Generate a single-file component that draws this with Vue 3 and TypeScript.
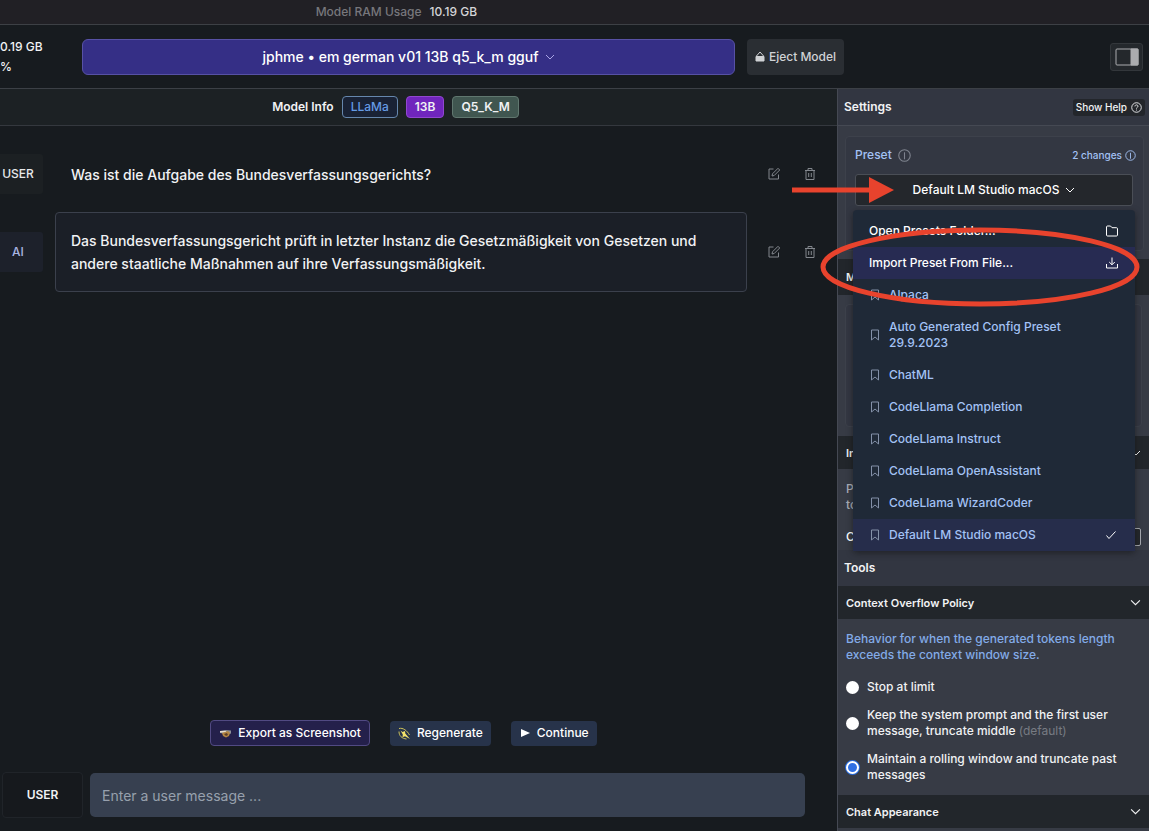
<script setup lang="ts">
import { ref } from 'vue'

interface Message { role: string; text: string; boxed: boolean }
interface Policy { id: string; label: string; note?: string }

const messages: Message[] = [
  { role: 'USER', text: 'Was ist die Aufgabe des Bundesverfassungsgerichts?', boxed: false },
  {
    role: 'AI',
    text: 'Das Bundesverfassungsgericht prüft in letzter Instanz die Gesetzmäßigkeit von Gesetzen und andere staatliche Maßnahmen auf ihre Verfassungsmäßigkeit.',
    boxed: true,
  },
]

const presets: string[] = [
  'Alpaca',
  'Auto Generated Config Preset 29.9.2023',
  'ChatML',
  'CodeLlama Completion',
  'CodeLlama Instruct',
  'CodeLlama OpenAssistant',
  'CodeLlama WizardCoder',
  'Default LM Studio macOS',
]
const preset = ref('Default LM Studio macOS')
const menuOpen = ref(true)

const policies: Policy[] = [
  { id: 'stop', label: 'Stop at limit' },
  { id: 'keep', label: 'Keep the system prompt and the first user message, truncate middle', note: '(default)' },
  { id: 'roll', label: 'Maintain a rolling window and truncate past messages' },
]
const policy = ref('roll')
const draft = ref('')
</script>

<template>
  <div class="app">
    <div class="topbar">
      <span class="dim">Model RAM Usage</span><span>10.19 GB</span>
    </div>

    <header class="header">
      <div class="usage"><span>0.19 GB</span><span>%</span></div>
      <button class="model" type="button">
        jphme • em german v01 13B q5_k_m gguf
        <svg width="10" height="6" viewBox="0 0 10 6"><path d="M1 1l4 4 4-4" /></svg>
      </button>
      <button class="eject" type="button">
        <svg width="10" height="11" viewBox="0 0 10 11"><path d="M5 1L9 5.500H1Z" /><path class="solid" d="M1 6h8v4H1z" /></svg>
        Eject Model
      </button>
      <button class="toggle" type="button" aria-label="Toggle sidebar">
        <svg width="24" height="18" viewBox="0 0 24 18"><rect x="1" y="1" width="22" height="16" rx="1" /><path d="M16 1h7v16h-7z" /></svg>
      </button>
    </header>

    <div class="body">
      <main class="chat">
        <div class="info">
          <span>Model Info</span>
          <span class="chip llama">LLaMa</span>
          <span class="chip size">13B</span>
          <span class="chip quant">Q5_K_M</span>
        </div>

        <div class="messages">
          <div v-for="m in messages" :key="m.role" class="message">
            <div class="role" :class="{ ai: m.boxed }">{{ m.role }}</div>
            <p class="bubble" :class="{ boxed: m.boxed }">{{ m.text }}</p>
            <button class="icon" type="button" aria-label="Edit">
              <svg width="14" height="14" viewBox="0 0 14 14"><path d="M6.500 2H2v10h9.500V7.500M5 9l.5-2.200L11 1.300l1.700 1.700-5.500 5.500z" /></svg>
            </button>
            <button class="icon" type="button" aria-label="Delete">
              <svg width="14" height="14" viewBox="0 0 14 14"><path d="M2 3.500h10M5 3.500V1.500h4v2M3 3.500v9h8v-9M5.700 6v4M8.300 6v4" /></svg>
            </button>
          </div>
        </div>

        <footer class="composer">
          <div class="actions">
            <button class="action export" type="button">
              <svg width="13" height="12" viewBox="0 0 13 12"><path d="M1 4l5-1 6 .5v3L9 7.500 1 6z" fill="#8d9096" /><path d="M1 4h6v1.500H1z" fill="#e9dfcf" /><path d="M3 6l6-2 2 2-1 3-3 1.500L4 9z" fill="#b48643" /><path d="M5 7l3-1 1 2-2 1z" fill="#5b3e29" /></svg>
              Export as Screenshot
            </button>
            <button class="action" type="button">
              <svg width="13" height="13" viewBox="0 0 13 13"><path class="trail" d="M1 1.500C5 .5 9 3.500 11.500 8M1 4.500C1 9 4 11.500 8.500 12" /><path d="M2.500 3.500l2 1.500L7 4l.3 2.500L12 12 7 9.300l-2.500 1 .3-2.800z" fill="#f3e36b" /></svg>
              Regenerate
            </button>
            <button class="action" type="button">
              <svg width="12" height="10" viewBox="0 0 12 10"><path d="M2 1l9 4-9 4z" fill="#fff" /></svg>
              Continue
            </button>
          </div>
          <form class="entry" @submit.prevent>
            <button class="as" type="button">USER</button>
            <input v-model="draft" type="text" aria-label="User message" placeholder="Enter a user message ..." />
          </form>
        </footer>
      </main>

      <aside class="settings">
        <div class="title">
          <h2>Settings</h2>
          <button class="help" type="button">
            Show Help
            <svg width="11" height="11" viewBox="0 0 12 12"><circle cx="6" cy="6" r="5.200" /><path d="M4.300 4.800c0-2.300 3.500-2 3.300 0C7.500 6 6 5.700 6 7.200M6 8.300v1" /></svg>
          </button>
        </div>

        <section class="pane preset-pane">
          <div class="card">
            <div class="preset-head">
              <span class="preset-name">Preset
                <svg width="13" height="13" viewBox="0 0 12 12"><circle cx="6" cy="6" r="5.300" /><path d="M6 3v6.500" /></svg>
              </span>
              <span class="changes">2 changes
                <svg width="11" height="11" viewBox="0 0 12 12"><circle cx="6" cy="6" r="5.200" /><path d="M6 3v6.500" /></svg>
              </span>
            </div>
            <div class="picker">
              <button class="select" type="button" aria-haspopup="menu" :aria-expanded="menuOpen" @click="menuOpen = !menuOpen">
                {{ preset }}
                <svg width="10" height="6" viewBox="0 0 10 6"><path d="M1 1l4 4 4-4" /></svg>
              </button>
              <div v-if="menuOpen" class="menu" role="menu">
                <button class="item command" type="button" role="menuitem">
                  <span>Open Presets Folder...</span>
                  <svg width="14" height="14" viewBox="0 0 14 14"><path d="M1.500 3c0-.6.4-1 1-1h3l1.500 1.700h4.500c.6 0 1 .4 1 1V11c0 .6-.4 1-1 1h-9c-.6 0-1-.4-1-1z" /></svg>
                </button>
                <button class="item command hover" type="button" role="menuitem">
                  <span>Import Preset From File...</span>
                  <svg width="14" height="14" viewBox="0 0 14 14"><path d="M7 1.500v7M4.200 6L7 8.800 9.800 6M1.500 8v4h11V8" /></svg>
                </button>
                <button
                  v-for="p in presets" :key="p" class="item" :class="{ chosen: p === preset }"
                  type="button" role="menuitemradio" :aria-checked="p === preset" @click="preset = p"
                >
                  <svg class="mark" width="12" height="12" viewBox="0 0 12 12"><path d="M2.500 1h7v10L6 8l-3.500 3z" /></svg>
                  <span>{{ p }}</span>
                  <svg v-if="p === preset" width="12" height="10" viewBox="0 0 12 10"><path d="M1.500 5.500l2.500 3L10.500 1.500" /></svg>
                </button>
              </div>
            </div>
          </div>
        </section>

        <h3 class="bar model-bar">M</h3>
        <section class="pane config-pane"><div class="card tall"></div></section>

        <h3 class="bar">In
          <svg width="10" height="6" viewBox="0 0 10 6"><path d="M1 1l4 4 4-4" /></svg>
        </h3>
        <section class="pane infer-pane">
          <p>P<br />to</p>
          <label class="ctx">C <input type="text" /></label>
        </section>

        <h2 class="tools">Tools</h2>
        <h3 class="bar">Context Overflow Policy
          <svg width="11" height="7" viewBox="0 0 10 6"><path d="M1 1l4 4 4-4" /></svg>
        </h3>
        <section class="pane policy-pane">
          <p>Behavior for when the generated tokens length exceeds the context window size.</p>
          <label v-for="o in policies" :key="o.id" class="policy">
            <input v-model="policy" type="radio" name="policy" :value="o.id" />
            <span>{{ o.label }} <span v-if="o.note" class="note">{{ o.note }}</span></span>
          </label>
        </section>
        <h3 class="bar">Chat Appearance
          <svg width="11" height="7" viewBox="0 0 10 6"><path d="M1 1l4 4 4-4" /></svg>
        </h3>
      </aside>
    </div>

    <svg class="marks" width="360" height="320" viewBox="0 0 360 320" aria-hidden="true">
      <path d="M3 190h80" />
      <path class="head" d="M80 177l25 13-25 13z" />
      <ellipse cx="191" cy="267" rx="157" ry="37" />
    </svg>
  </div>
</template>

<style>
body { margin: 0; background: #171b20; }
</style>

<style scoped>
* { box-sizing: border-box; }
.app {
  position: relative; display: flex; flex-direction: column; min-height: 100vh; overflow: hidden;
  background: #171b1f; color: #f1f2f4; font: 500 12px/16px Inter, "Liberation Sans", sans-serif;
}
h2, h3, p { margin: 0; font-size: 12px; line-height: 16px; }
h2, h3 { font-weight: 600; }
button { margin: 0; padding: 0; border: 0; background: none; color: inherit; font: inherit; cursor: pointer; }
svg { flex: none; fill: none; stroke: currentColor; }
.topbar {
  display: flex; justify-content: center; align-items: center; gap: 8px; height: 25px; padding-right: 31%;
  border-bottom: 1px solid #3d4045; background: #212025; color: #d4d4d7;
}
.dim { color: #77777c; }
.header {
  display: grid; grid-template-columns: 70px minmax(0, 653fr) 97px minmax(33px, 287fr); column-gap: 12px;
  align-items: center; height: 64px; padding-right: 6px; border-bottom: 1px solid #3c4046;
}
.usage { display: flex; flex-direction: column; gap: 4px; }
.model {
  display: flex; align-items: center; justify-content: center; gap: 6px; height: 36px;
  border: 1px solid #5751a5; border-radius: 6px; background: #352f86; color: #fff; font-size: 14px;
}
.model svg { color: #aaa5e5; }
.eject {
  display: flex; align-items: center; justify-content: center; gap: 4px; height: 36px;
  border-radius: 4px; background: #2a2e33; color: #d0d2d5;
}
.solid { fill: currentColor; }
.toggle { display: grid; place-items: center; justify-self: end; width: 33px; height: 28px; border: 1px solid #33373b; border-radius: 3px; background: #24282c; color: #aaabae; }
.toggle path { fill: currentColor; }
.body { display: grid; grid-template-columns: minmax(0, 1fr) 312px; flex: 1; }

.chat { display: flex; flex-direction: column; }
.info {
  display: flex; align-items: center; justify-content: center; gap: 8px; height: 37px; padding-right: 46px;
  border-bottom: 1px solid #34383e; background: #1c2124; font-weight: 600;
}
.chip { padding: 2px 8px; border: 1px solid; border-radius: 4px; }
.llama { border-color: #6687ad; background: #192235; color: #659be4; font-weight: 500; }
.size { border-color: #9147d0; background: #7025bd; }
.quant { border-color: #60776f; background: #405650; }
.messages { display: flex; flex: 1; flex-direction: column; gap: 18px; padding: 28px 20px 0 0; }
.message { display: flex; align-items: center; }
.role {
  display: grid; place-items: center; width: 43px; height: 40px; margin-right: 12px; padding-right: 7px;
  border-radius: 0 3px 3px 0; background: #1c2023; color: #e7e8ea;
}
.role.ai { background: #1d212b; color: #a9b5e2; }
.bubble { flex: 1; padding: 8px 16px; font-size: 14px; font-weight: 500; line-height: 23px; }
.bubble.boxed { padding: 16px 15px; border: 1px solid #3b404c; border-radius: 4px; background: #1b1f27; }
.icon { display: grid; margin-left: 22px; color: #83878d; }
.bubble + .icon { margin-left: 20px; }
.composer { padding: 0 32px 13px 2px; }
.actions { display: flex; justify-content: center; align-items: center; gap: 20px; margin-bottom: 26px; }
.action { display: flex; align-items: center; gap: 6px; height: 25px; padding: 0 8px; border-radius: 4px; background: #27334a; color: #fff; }
.action svg { stroke: none; }
.action .trail { stroke: #cfc45b; }
.export { height: 26px; border: 1px solid #514a83; background: #24204b; }
.entry { display: flex; align-items: center; gap: 7px; }
.as { width: 81px; height: 46px; border: 1px solid #202429; border-radius: 4px; background: #16191d; font-weight: 600; }
.entry input {
  flex: 1; min-width: 0; height: 44px; padding: 0 12px; border: 0; border-radius: 5px; background: #374050;
  color: #fff; font: 400 14px/20px Inter, "Liberation Sans", sans-serif;
}
.entry input::placeholder { color: #97a0ad; opacity: 1; }

.settings { border-left: 1px solid #454953; background: #373b45; }
.title { display: flex; align-items: center; justify-content: space-between; height: 37px; padding: 0 4px 0 6px; border-bottom: 1px solid #454953; background: #323641; }
.help { display: flex; align-items: center; gap: 4px; height: 17px; padding: 0 3px; border-radius: 3px; background: #23262b; font-size: 10px; }
.preset-pane { height: 133px; padding: 10px 5px 0 7px; }
.card { height: 115px; padding: 10px 10px 0 9px; border: 1px solid #3d414b; border-radius: 4px; background: #333742; }
.preset-head { display: flex; align-items: center; justify-content: space-between; height: 16px; color: #a3c2f5; }
.preset-name, .changes { display: flex; align-items: center; gap: 6px; }
.preset-name svg { color: #7e838e; }
.changes { gap: 3px; margin-right: -3px; font-size: 10px; }
.picker { position: relative; margin-top: 11px; }
.select {
  display: flex; align-items: center; justify-content: center; gap: 6px; width: 100%; height: 32px;
  border: 1px solid #4a4e56; border-radius: 3px; background: #24272c; color: #fff;
}
.menu { position: absolute; z-index: 2; top: 36px; right: -2px; left: -2px; padding-top: 5px; border-radius: 4px; background: #1f2937; box-shadow: 0 2px 6px #1118; }
.item { display: flex; align-items: center; gap: 8px; width: 100%; min-height: 32px; padding: 8px 16px; color: #a3c2f5; text-align: left; }
.item span { flex: 1; padding-right: 48px; }
.command { color: #fff; }
.command span { padding-right: 0; }
.hover { background: #272b52; }
.chosen { background: #262d4b; }
.chosen svg:last-child { margin-right: 2px; color: #fff; }
.mark { color: #8390a8; }
.bar { display: flex; align-items: center; justify-content: space-between; height: 33px; padding: 0 8px; background: #22262b; font-size: 11px; }
.model-bar { height: 36px; }
.config-pane { height: 141px; padding: 9px 7px; }
.card.tall { height: 123px; }
.infer-pane { height: 81px; padding: 12px 8px; color: #a9adb5; }
.ctx { display: flex; align-items: center; justify-content: space-between; margin-top: 15px; color: #fff; }
.ctx input { width: 60px; height: 18px; border: 1px solid #a6a9af; border-radius: 2px; background: #24272c; color: #fff; }
.tools { padding: 10px 6px; background: #323641; }
.policy-pane { display: flex; flex-direction: column; gap: 12px; padding: 12px 8px; }
.policy-pane p { margin-bottom: 4px; color: #83abe8; font-weight: 500; }
.policy { display: flex; align-items: center; gap: 8px; }
.policy input { flex: none; appearance: none; width: 13px; height: 13px; margin: 0; border-radius: 50%; background: #fff; }
.policy input:checked { border: 2px solid #fff; background: #2f6fe4; box-shadow: 0 0 0 1px #2569dc; }
.note { color: #777b83; font-weight: 400; }

/* Callout arrow and ring drawn over the page */
.marks { position: absolute; z-index: 5; top: 0; right: 0; color: #e8432d; stroke-width: 5; pointer-events: none; }
.marks .head { fill: currentColor; stroke: none; }
</style>
